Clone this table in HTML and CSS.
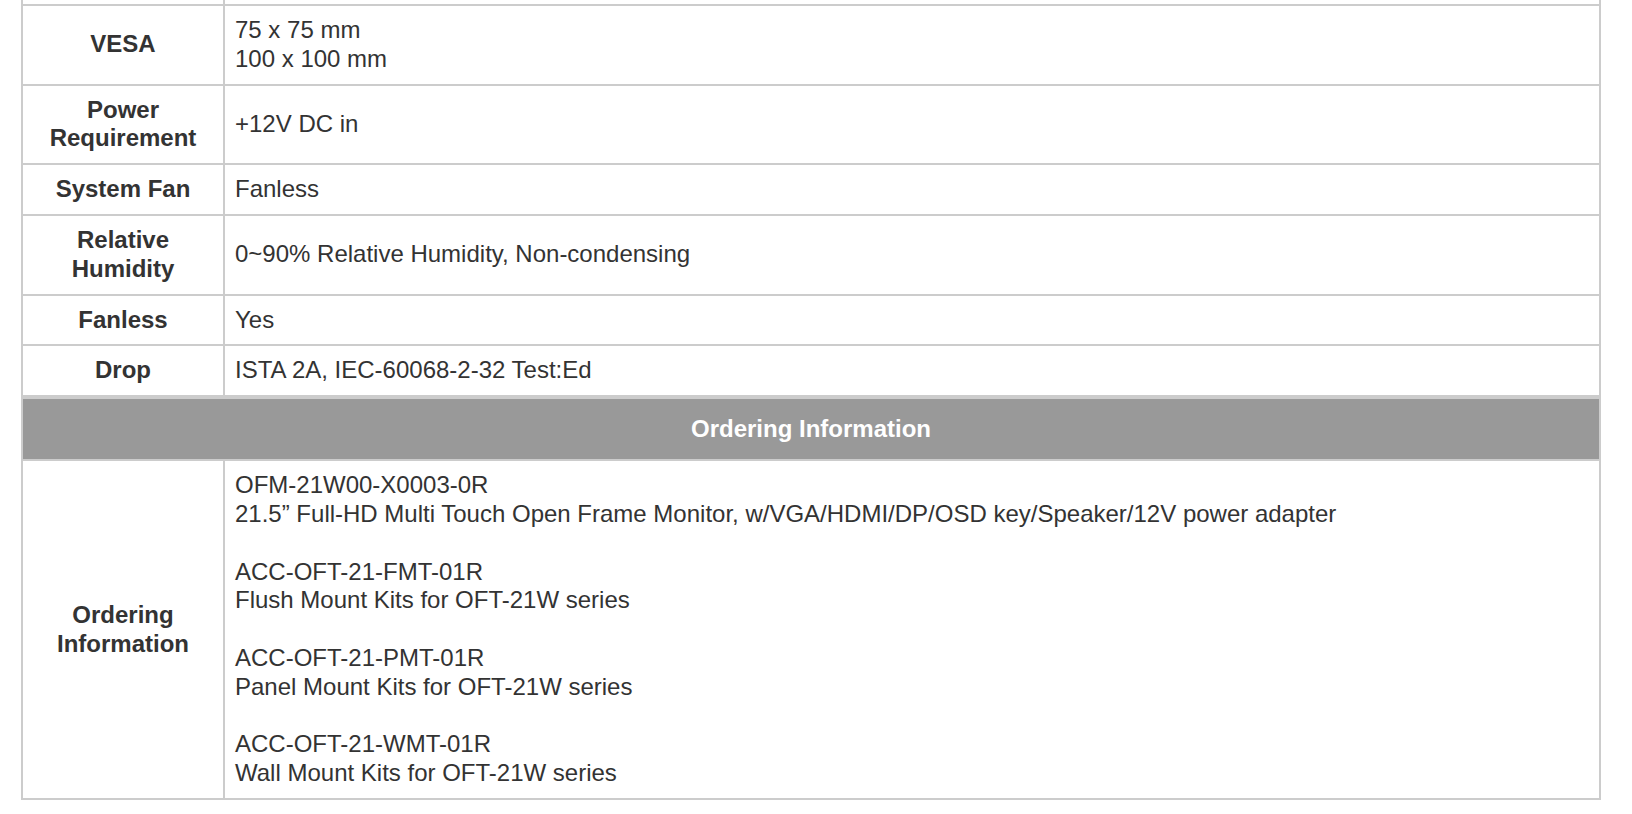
FILE: index.html
```html
<!DOCTYPE html>
<html lang="en">
<head>
<meta charset="utf-8">
<title>Specifications</title>
<link rel="stylesheet" href="styles.css">
</head>
<body>
<div class="page">
  <table class="spec">
    <tbody>
      <tr class="spacer"><td class="label"></td><td class="value"></td></tr>
      <tr><th class="label">VESA</th><td class="value">75 x 75 mm<br>100 x 100 mm</td></tr>
      <tr><th class="label">Power Requirement</th><td class="value">+12V DC in</td></tr>
      <tr><th class="label">System Fan</th><td class="value">Fanless</td></tr>
      <tr><th class="label">Relative Humidity</th><td class="value">0~90% Relative Humidity, Non-condensing</td></tr>
      <tr><th class="label">Fanless</th><td class="value">Yes</td></tr>
      <tr><th class="label">Drop</th><td class="value">ISTA 2A, IEC-60068-2-32 Test:Ed</td></tr>
      <tr><th class="section" colspan="2">Ordering Information</th></tr>
      <tr><th class="label">Ordering Information</th><td class="value">OFM-21W00-X0003-0R<br>21.5” Full-HD Multi Touch Open Frame Monitor, w/VGA/HDMI/DP/OSD key/Speaker/12V power adapter<br><br>ACC-OFT-21-FMT-01R<br>Flush Mount Kits for OFT-21W series<br><br>ACC-OFT-21-PMT-01R<br>Panel Mount Kits for OFT-21W series<br><br>ACC-OFT-21-WMT-01R<br>Wall Mount Kits for OFT-21W series</td></tr>
    </tbody>
  </table>
</div>
</body>
</html>
```

FILE: styles.css
```css
html, body {
  margin: 0;
  padding: 0;
  background: #fff;
}

.page {
  padding-left: 21px;
}

.spec {
  width: 1580px;
  table-layout: fixed;
  border-collapse: separate;
  border-spacing: 0;
  border-left: 2px solid #ccc;
  font-family: "Liberation Sans", Arial, Helvetica, sans-serif;
  font-size: 24px;
  line-height: 1.2;
  color: #333;
}

.spec th,
.spec td {
  border-right: 2px solid #ccc;
  border-bottom: 2px solid #ccc;
  vertical-align: middle;
  padding: 10px 10px;
}

.label {
  box-sizing: border-box;
  width: 202px;
  font-weight: bold;
  text-align: center;
}

.value {
  text-align: left;
  font-weight: normal;
}

.spacer td {
  height: 4px;
  padding: 0;
  line-height: 0;
}

.spec .section {
  background: #999;
  color: #fff;
  font-weight: bold;
  text-align: center;
  border-top: 2px solid #ccc;
  padding: 15.6px 10px;
}
```
